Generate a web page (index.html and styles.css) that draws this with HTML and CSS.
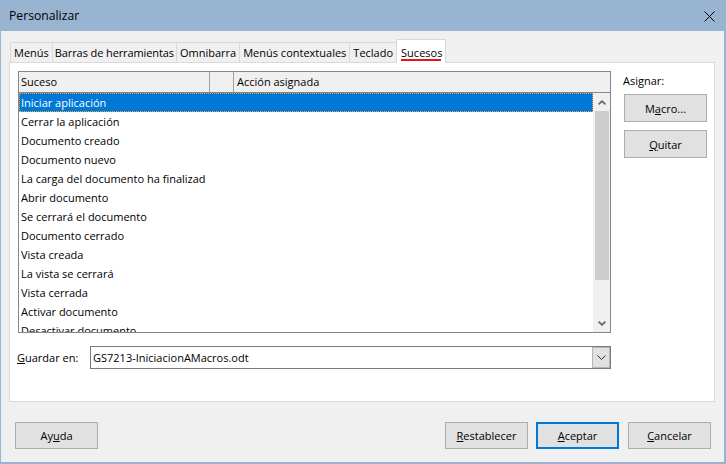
FILE: index.html
```html
<!DOCTYPE html>
<html lang="es">
<head>
<meta charset="utf-8">
<title>Personalizar</title>
<link rel="stylesheet" href="styles.css">
</head>
<body>
<div class="window">
  <div class="titlebar">
    <span class="title">Personalizar</span>
    <svg class="close" width="11" height="11" viewBox="0 0 11 11"><path d="M0.5 0.5 L10.5 10.5 M10.5 0.5 L0.5 10.5" stroke="#000" stroke-width="1" fill="none"/></svg>
  </div>
  <div class="content">
    <div class="tabs">
      <div class="tab">Menús</div>
      <div class="tab tab-tight">Barras de herramientas</div>
      <div class="tab">Omnibarra</div>
      <div class="tab">Menús contextuales</div>
      <div class="tab">Teclado</div>
      <div class="tab active">Sucesos</div>
    </div>
    <div class="panel">
      <div class="panel-top">
        <div class="tree">
          <div class="tree-header">
            <div class="hcol col-suceso">Suceso</div>
            <div class="hcol col-mid"></div>
            <div class="hcol col-accion">Acción asignada</div>
          </div>
          <div class="tree-body">
            <div class="rows">
              <div class="row selected"><span class="cell">Iniciar aplicación</span></div>
              <div class="row"><span class="cell">Cerrar la aplicación</span></div>
              <div class="row"><span class="cell">Documento creado</span></div>
              <div class="row"><span class="cell">Documento nuevo</span></div>
              <div class="row"><span class="cell">La carga del documento ha finalizado</span></div>
              <div class="row"><span class="cell">Abrir documento</span></div>
              <div class="row"><span class="cell">Se cerrará el documento</span></div>
              <div class="row"><span class="cell">Documento cerrado</span></div>
              <div class="row"><span class="cell">Vista creada</span></div>
              <div class="row"><span class="cell">La vista se cerrará</span></div>
              <div class="row"><span class="cell">Vista cerrada</span></div>
              <div class="row"><span class="cell">Activar documento</span></div>
              <div class="row"><span class="cell">Desactivar documento</span></div>
            </div>
            <div class="scrollbar">
              <div class="sb-btn"><svg width="8" height="5" viewBox="0 0 8 5"><path d="M0.6 4.4 L4 1.2 L7.4 4.4" stroke="#606060" stroke-width="1.6" fill="none"/></svg></div>
              <div class="sb-thumb"></div>
              <div class="sb-track"></div>
              <div class="sb-btn"><svg width="8" height="5" viewBox="0 0 8 5"><path d="M0.6 0.6 L4 3.8 L7.4 0.6" stroke="#606060" stroke-width="1.6" fill="none"/></svg></div>
            </div>
          </div>
        </div>
        <div class="assign">
          <div class="assign-label">Asignar:</div>
          <div class="btn side-btn">M<u>a</u>cro...</div>
          <div class="btn side-btn"><u>Q</u>uitar</div>
        </div>
      </div>
      <div class="save-row">
        <div class="save-label"><u>G</u>uardar en:</div>
        <div class="combo">
          <div class="combo-text">GS7213-IniciacionAMacros.odt</div>
          <div class="combo-btn"><svg width="9" height="5" viewBox="0 0 9 5"><path d="M0.5 0.5 L4.5 4.5 L8.5 0.5" stroke="#333" stroke-width="1" fill="none"/></svg></div>
        </div>
      </div>
    </div>
    <div class="footer">
      <div class="btn foot-btn">Ay<u>u</u>da</div>
      <div class="spacer"></div>
      <div class="btn foot-btn"><u>R</u>establecer</div>
      <div class="btn foot-btn default"><u>A</u>ceptar</div>
      <div class="btn foot-btn"><u>C</u>ancelar</div>
    </div>
  </div>
</div>
</body>
</html>
```

FILE: styles.css
```css
* { box-sizing: border-box; }

body {
  margin: 0;
  font-family: "Open Sans", "Noto Sans", sans-serif;
  font-size: 11px;
  color: #000;
  background: #f0f0f0;
}

u { text-decoration: underline; text-underline-offset: 1px; }

.window {
  width: 726px;
  height: 464px;
  border-left: 1px solid #99b4d1;
  border-right: 2px solid #99b4d1;
  border-bottom: 2px solid #99b4d1;
  background: #f0f0f0;
  display: flex;
  flex-direction: column;
}

.titlebar {
  height: 31px;
  flex: none;
  background: #99b4d1;
  display: flex;
  align-items: center;
  justify-content: space-between;
  padding: 0 9px 0 8px;
  font-size: 12.2px;
}

.close { display: block; margin-top: 1px; }

.content {
  padding: 8px 9px 0 8px;
}

.tabs {
  display: flex;
  align-items: flex-end;
  height: 23px;
  padding-left: 1px;
}

.tab {
  height: 20px;
  line-height: 19px;
  padding: 0 3px;
  border-top: 1px solid #d9d9d9;
  border-right: 1px solid #d9d9d9;
  background: #f0f0f0;
  white-space: nowrap;
}

.tab:first-child { border-left: 1px solid #d9d9d9; }

.tab-tight {
  padding: 0 2px;
  letter-spacing: -0.1px;
}

.tab.active {
  height: 24px;
  line-height: 26px;
  margin-bottom: -1px;
  padding: 0 3px 0 4px;
  background: #fff;
  border-left: 1px solid #d9d9d9;
  margin-left: -1px;
  position: relative;
  z-index: 1;
}

.tab.active::after {
  content: "";
  position: absolute;
  left: 4px;
  right: 4px;
  bottom: 2px;
  height: 2px;
  background: #e5141b;
}

.panel {
  width: 706px;
  height: 340px;
  border: 1px solid #d9d9d9;
  background: #fff;
  padding: 8px 7px 0 8px;
}

.panel-top {
  display: flex;
  gap: 12px;
}

.tree {
  width: 593px;
  height: 262px;
  border: 1px solid #828790;
  display: flex;
  flex-direction: column;
}

.tree-header {
  height: 21px;
  flex: none;
  display: flex;
  background: #f0f0f0;
  border-bottom: 1px solid #828790;
}

.hcol {
  line-height: 19px;
  white-space: nowrap;
}

.col-suceso {
  width: 191px;
  padding-left: 2px;
  border-right: 1px solid #a0a0a0;
}

.col-mid {
  width: 24px;
  border-right: 1px solid #a0a0a0;
}

.col-accion {
  flex: 1;
  padding-left: 3px;
}

.tree-body {
  flex: 1;
  display: flex;
  overflow: hidden;
}

.rows {
  flex: 1;
  overflow: hidden;
  background: #fff;
}

.row {
  height: 19px;
  line-height: 18px;
  padding-left: 1px;
  border: 1px solid transparent;
  white-space: nowrap;
  overflow: hidden;
}

.cell {
  display: block;
  width: 185px;
  overflow: hidden;
}

.row.selected {
  background: #0078d7;
  color: #fff;
  border: 1px dotted #f5a623;
}

.scrollbar {
  width: 17px;
  flex: none;
  display: flex;
  flex-direction: column;
  background: #f0f0f0;
}

.sb-btn {
  height: 18px;
  flex: none;
  display: flex;
  align-items: center;
  justify-content: center;
  padding-left: 1px;
}

.sb-thumb {
  height: 169px;
  flex: none;
  margin: 0 1px 0 2px;
  background: #cdcdcd;
}

.sb-track { flex: 1; }

.assign {
  width: 84px;
  display: flex;
  flex-direction: column;
}

.assign-label {
  margin-top: 2px;
  line-height: 16px;
  margin-bottom: 5px;
}

.btn {
  background: #e1e1e1;
  border: 1px solid #adadad;
  display: flex;
  align-items: center;
  justify-content: center;
  white-space: nowrap;
}

.side-btn {
  width: 83px;
  height: 28px;
  margin-left: 1px;
  margin-bottom: 8px;
}

.save-row {
  display: flex;
  align-items: center;
  margin-top: 13px;
  margin-left: -1px;
}

.save-label {
  width: 73px;
  line-height: 16px;
}

.combo {
  width: 521px;
  height: 23px;
  border: 1px solid #7a7a7a;
  background: #fff;
  display: flex;
}

.combo-text {
  flex: 1;
  line-height: 21px;
  padding-left: 2px;
}

.combo-btn {
  width: 18px;
  background: #e1e1e1;
  border: 1px solid #b5b5b5;
  display: flex;
  align-items: center;
  justify-content: center;
}

.footer {
  display: flex;
  margin-top: 20px;
  padding: 0 4px 0 6px;
  gap: 8px;
}

.spacer { flex: 1; }

.foot-btn {
  width: 83px;
  height: 27px;
}

.foot-btn.default {
  border: 2px solid #0078d7;
  margin-right: 1px;
}
```
